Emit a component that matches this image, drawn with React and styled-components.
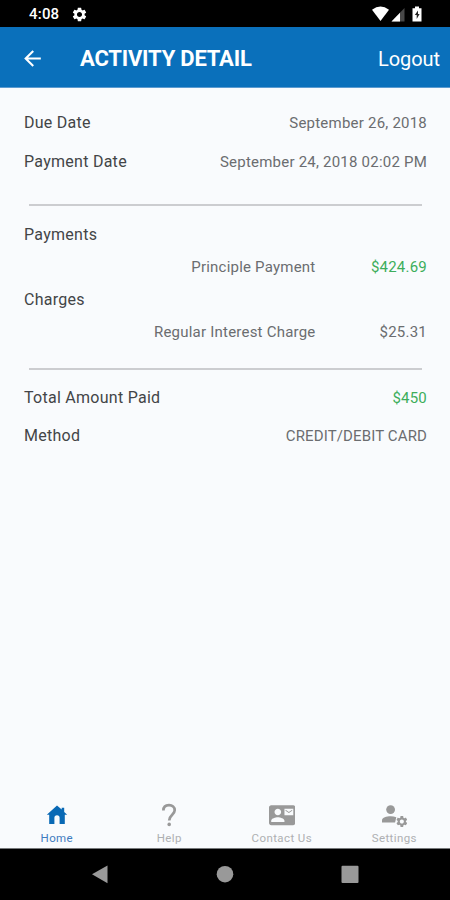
import React from "react";
import styled, { createGlobalStyle } from "styled-components";
import { MdSettings, MdArrowBack, MdContactMail } from "react-icons/md";

const GlobalStyle = createGlobalStyle`
  * { box-sizing: border-box; }
  body { margin: 0; background: #f9fbfd; font-family: Roboto, "Liberation Sans", sans-serif; }
  svg { display: block; flex: none; }
`;

const Screen = styled.div`
  width: 450px;
  height: 900px;
  display: flex;
  flex-direction: column;
  background: #f9fbfd;
  overflow: hidden;
`;

const StatusBar = styled.div`
  height: 27px;
  flex: none;
  display: flex;
  align-items: center;
  padding: 1px 27px 0 29px;
  background: #000;
  color: #fff;
`;

const Clock = styled.span`
  width: 41.5px;
  font-size: 15px;
  line-height: 20px;
  font-weight: 500;
  letter-spacing: 0.2px;
`;

const StatusIcons = styled.div`
  margin-left: auto;
`;

const Header = styled.header`
  height: 61px;
  flex: none;
  display: flex;
  align-items: center;
  padding: 3px 10px 0 19.5px;
  background: #0a70bb;
  border-bottom: 1px solid #5c9bd0;
  color: #fff;
`;

const Title = styled.h1`
  margin: 0 auto 0 35.5px;
  font-size: 22px;
  line-height: 28px;
  font-weight: 700;
  letter-spacing: -0.2px;
  white-space: nowrap;
`;

const Logout = styled.button`
  border: 0;
  padding: 0;
  background: none;
  color: #fff;
  font: 400 20px/26px Roboto, sans-serif;
  letter-spacing: -0.05px;
`;

const Content = styled.main`
  flex: 1;
  padding: 16px 23px 0 24px;
`;

const Row = styled.div`
  height: ${(p) => (p.$compact ? "32.3px" : "38.5px")};
  display: flex;
  align-items: center;
  white-space: nowrap;
`;

const Label = styled.span`
  font-size: 16px;
  line-height: 20px;
  color: #434547;
  letter-spacing: 0.27px;
`;

const Value = styled.span`
  margin-left: auto;
  font-size: 15px;
  line-height: 20px;
  letter-spacing: ${(p) => p.$spacing || "0.22px"};
  color: ${(p) => (p.$positive ? "#3dae5b" : "#6b6d70")};
`;

const Amount = styled(Value)`
  width: 111.5px;
  margin-left: 0;
  text-align: right;
`;

const Divider = styled.hr`
  height: 2px;
  margin: ${(p) => p.$margin};
  border: 0;
  background: #cccdd0;
`;

const Tabs = styled.nav`
  height: 50px;
  flex: none;
  display: grid;
  grid-template-columns: repeat(4, 112.5px);
  padding-left: 0.6px;
  border-bottom: 1px solid #77797b;
`;

const Tab = styled.div`
  display: flex;
  flex-direction: column;
  align-items: center;
  color: ${(p) => (p.$active ? "#0969b5" : "#999")};
`;

const TabIcon = styled.div`
  height: 32px;
  display: flex;
  align-items: center;
  justify-content: center;
`;

const TabText = styled.span`
  font-size: 11.5px;
  line-height: 14px;
  letter-spacing: 0.4px;
  color: ${(p) => (p.$active ? "#3e7bbf" : "#aeb0b2")};
`;

const NavBar = styled.div`
  height: 51px;
  flex: none;
  display: flex;
  justify-content: center;
  background: #000;
`;

const GEAR =
  "M19.14 12.94c.04-.3.06-.61.06-.94s-.02-.64-.07-.94l2.03-1.58c.18-.14.23-.41.12-.61l-1.92-3.32c-.12-.22-.37-.29-.59-.22l-2.39.96c-.5-.38-1.03-.7-1.62-.94L14.4 2.81c-.04-.24-.24-.41-.48-.41h-3.84c-.24 0-.43.17-.47.41l-.36 2.54c-.59.24-1.13.57-1.62.94l-2.39-.96c-.22-.08-.47 0-.59.22L2.74 8.87c-.12.21-.08.47.12.61l2.03 1.58c-.05.3-.09.63-.09.94s.02.64.07.94l-2.03 1.58c-.18.14-.23.41-.12.61l1.92 3.32c.12.22.37.29.59.22l2.39-.96c.5.38 1.03.7 1.62.94l.36 2.54c.05.24.24.41.48.41h3.84c.24 0 .44-.17.47-.41l.36-2.54c.59-.24 1.13-.56 1.62-.94l2.39.96c.22.08.47 0 .59-.22l1.92-3.32c.12-.22.07-.47-.12-.61l-2.01-1.58zM12 15.6c-1.98 0-3.6-1.62-3.6-3.6s1.62-3.6 3.6-3.6 3.6 1.62 3.6 3.6-1.62 3.6-3.6 3.6z";

const HomeIcon = () => (
  <svg width="24" height="24" viewBox="0 0 24 24" fill="currentColor">
    <path d="M12 2.4 1.8 11.7h2.4V21h5.2v-6.2a2.6 2.6 0 0 1 5.2 0V21h5.2v-9.3h2.4l-3-2.8V4.8h-2.5v1.7Z" />
  </svg>
);

const HelpIcon = () => (
  <svg width="24" height="26" viewBox="0 0 24 26">
    <path
      d="M6.4 8.6C6.4 5 8.7 3.2 12 3.2s5.7 1.9 5.7 5.1c0 4.3-5.5 4.7-5.5 10.2"
      fill="none"
      stroke="currentColor"
      strokeWidth="2.7"
    />
    <circle cx="12.2" cy="22.4" r="1.8" fill="currentColor" />
  </svg>
);

const AccountIcon = () => (
  <svg width="26" height="24" viewBox="0 0 26 24" fill="currentColor">
    <circle cx="9.6" cy="6.6" r="4.4" />
    <path d="M1 19.5v-2.3c0-2.8 4.6-4 8.6-4 2 0 4 .3 5.7 1l-1.2 5.3Z" />
    <path transform="translate(14 11.6) scale(.57)" d={GEAR} />
  </svg>
);

const SignalIcons = () => (
  <svg width="51" height="17" viewBox="0 0 51 17">
    <path d="M0 3.8Q8.5-2.8 17 3.8L8.5 15Z" fill="#fff" />
    <path d="M19.5 15.5 32.5 2v13.5Z" fill="#484848" />
    <path d="M19.5 15.5 28 6.7v8.8Z" fill="#fff" />
    <path d="M43 .5h4v1.8h2.5v13.2h-9V2.3H43Z" fill="#fff" />
    <path d="M46 4.5 42.8 9h1.9v4l2.9-5h-1.6Z" fill="#222" />
  </svg>
);

const NavIcons = () => (
  <svg width="270" height="51" viewBox="0 0 270 51" fill="#999">
    <path d="M2 25.2 17.5 16.5v17.7Z" />
    <circle cx="135" cy="25.2" r="8.3" />
    <rect x="251.5" y="16.7" width="17" height="17.2" rx="1" />
  </svg>
);

const TABS = [
  { name: "Home", icon: <HomeIcon />, active: true },
  { name: "Help", icon: <HelpIcon /> },
  { name: "Contact Us", icon: <MdContactMail size={26.5} /> },
  { name: "Settings", icon: <AccountIcon /> },
];

export default function App() {
  return (
    <>
      <GlobalStyle />
      <Screen>
        <StatusBar>
          <Clock>4:08</Clock>
          <MdSettings size={17} />
          <StatusIcons>
            <SignalIcons />
          </StatusIcons>
        </StatusBar>
        <Header>
          <MdArrowBack size={25} />
          <Title>ACTIVITY DETAIL</Title>
          <Logout>Logout</Logout>
        </Header>
        <Content>
          <Row>
            <Label>Due Date</Label>
            <Value>September 26, 2018</Value>
          </Row>
          <Row>
            <Label>Payment Date</Label>
            <Value>September 24, 2018 02:02 PM</Value>
          </Row>
          <Divider $margin="23px 5px 13px" />
          <Row $compact>
            <Label>Payments</Label>
          </Row>
          <Row $compact>
            <Value>Principle Payment</Value>
            <Amount $positive>$424.69</Amount>
          </Row>
          <Row $compact>
            <Label>Charges</Label>
          </Row>
          <Row $compact>
            <Value>Regular Interest Charge</Value>
            <Amount>$25.31</Amount>
          </Row>
          <Divider $margin="20px 5px 8.5px" />
          <Row>
            <Label>Total Amount Paid</Label>
            <Value $positive>$450</Value>
          </Row>
          <Row>
            <Label>Method</Label>
            <Value $spacing="0.13px">CREDIT/DEBIT CARD</Value>
          </Row>
        </Content>
        <Tabs>
          {TABS.map((tab) => (
            <Tab key={tab.name} $active={tab.active}>
              <TabIcon>{tab.icon}</TabIcon>
              <TabText $active={tab.active}>{tab.name}</TabText>
            </Tab>
          ))}
        </Tabs>
        <NavBar>
          <NavIcons />
        </NavBar>
      </Screen>
    </>
  );
}
